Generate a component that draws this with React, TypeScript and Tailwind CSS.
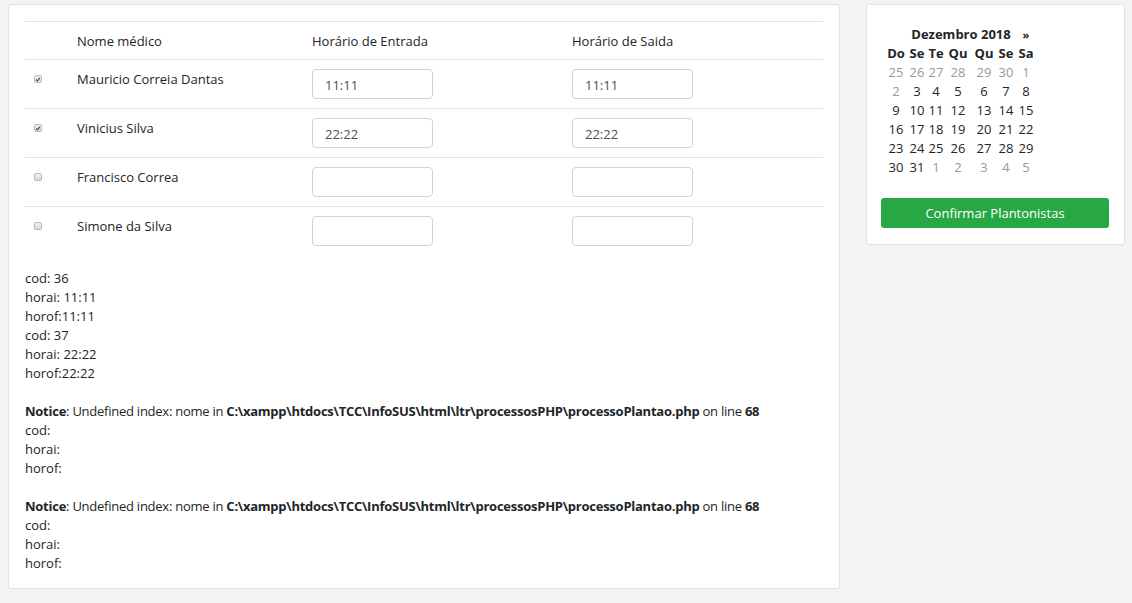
import React from 'react'

const medicos = [
  { nome: 'Mauricio Correia Dantas', checked: true, entrada: '11:11', saida: '11:11' },
  { nome: 'Vinicius Silva', checked: true, entrada: '22:22', saida: '22:22' },
  { nome: 'Francisco Correa', checked: false, entrada: '', saida: '' },
  { nome: 'Simone da Silva', checked: false, entrada: '', saida: '' },
]

// [dia, mês atual?]
const semanas: [number, boolean][][] = [
  [[25, false], [26, false], [27, false], [28, false], [29, false], [30, false], [1, false]],
  [[2, false], [3, true], [4, true], [5, true], [6, true], [7, true], [8, true]],
  [[9, true], [10, true], [11, true], [12, true], [13, true], [14, true], [15, true]],
  [[16, true], [17, true], [18, true], [19, true], [20, true], [21, true], [22, true]],
  [[23, true], [24, true], [25, true], [26, true], [27, true], [28, true], [29, true]],
  [[30, true], [31, true], [1, false], [2, false], [3, false], [4, false], [5, false]],
]

const colW = ['w-[22px]', 'w-[20px]', 'w-[18px]', 'w-[26px]', 'w-[26px]', 'w-[18px]', 'w-[22px]']
const diasSemana = ['Do', 'Se', 'Te', 'Qu', 'Qu', 'Se', 'Sa']

function Check({ checked }: { checked: boolean }) {
  return (
    <span className="mt-[5px] ml-[9px] flex h-[8px] w-[8px] items-center justify-center rounded-[2px] border border-[#b9b9b9] bg-gradient-to-b from-[#f4f4f4] to-[#d8d8d8]">
      {checked && (
        <svg viewBox="0 0 8 8" className="h-[7px] w-[7px]">
          <path d="M1.5 4.2 L3.2 5.8 L6.5 1.8" fill="none" stroke="#333" strokeWidth="1.4" />
        </svg>
      )}
    </span>
  )
}

function Notice() {
  return (
    <>
      <div className="h-[19px]" />
      <div className="tracking-[-0.25px]">
        <b>Notice</b>: Undefined index: nome in{' '}
        <b>C:\xampp\htdocs\TCC\InfoSUS\html\ltr\processosPHP\processoPlantao.php</b> on line <b>68</b>
      </div>
      <div>cod:</div>
      <div>horai:</div>
      <div>horof:</div>
    </>
  )
}

export default function App() {
  return (
    <div className="min-h-screen bg-[#f2f3f5] pt-[4px] pl-[8px] pr-[7px] font-['Open_Sans',sans-serif] text-[13px] leading-[19px] text-[#212529]">
      <div className="flex items-start gap-[26px]">
        {/* Tabela de plantonistas */}
        <div className="w-[832px] rounded-[3px] border border-[#dfe1e4] bg-white px-4 pt-4 pb-[15px]">
          <table className="w-full border-collapse border-t border-[#dee2e6]">
            <thead>
              <tr className="border-b border-[#dee2e6]">
                <th className="w-[40px]" />
                <th className="w-[235px] pt-[10px] pb-[8px] pl-3 text-left font-normal">Nome médico</th>
                <th className="w-[260px] pt-[10px] pb-[8px] pl-3 text-left font-normal">Horário de Entrada</th>
                <th className="pt-[10px] pb-[8px] pl-3 text-left font-normal">Horário de Saida</th>
              </tr>
            </thead>
            <tbody>
              {medicos.map((m, i) => (
                <tr key={m.nome} className={i < medicos.length - 1 ? 'border-b border-[#dee2e6]' : ''}>
                  <td className="pt-[10px] align-top">
                    <Check checked={m.checked} />
                  </td>
                  <td className="pt-[10px] pl-3 align-top">{m.nome}</td>
                  <td className="py-[9px] pl-3 align-top">
                    <input
                      defaultValue={m.entrada}
                      className="h-[30px] w-[121px] rounded-[4px] border border-[#ced4da] px-3 pt-[2px] text-[13px] text-[#495057] outline-none"
                    />
                  </td>
                  <td className="py-[9px] pl-3 align-top">
                    <input
                      defaultValue={m.saida}
                      className="h-[30px] w-[121px] rounded-[4px] border border-[#ced4da] px-3 pt-[2px] text-[13px] text-[#495057] outline-none"
                    />
                  </td>
                </tr>
              ))}
            </tbody>
          </table>

          <div className="mt-[14px]">
            <div>cod: 36</div>
            <div>horai: 11:11</div>
            <div>horof:11:11</div>
            <div>cod: 37</div>
            <div>horai: 22:22</div>
            <div>horof:22:22</div>
            <Notice />
            <Notice />
          </div>
        </div>

        {/* Calendário */}
        <div className="w-[259px] rounded-[3px] border border-[#dfe1e4] bg-white px-[14px] pt-[20px] pb-[16px]">
          <table className="ml-[4px] border-collapse text-center">
            <thead>
              <tr>
                <th className={colW[0]} />
                <th colSpan={5} className="py-0 font-bold">Dezembro 2018</th>
                <th className="text-[11px] font-bold">»</th>
              </tr>
              <tr>
                {diasSemana.map((d, i) => (
                  <th key={i} className={`${colW[i]} font-bold`}>{d}</th>
                ))}
              </tr>
            </thead>
            <tbody>
              {semanas.map((s, i) => (
                <tr key={i}>
                  {s.map(([d, atual], j) => (
                    <td key={j} className={atual ? 'text-[#212529]' : 'text-[#999999]'}>{d}</td>
                  ))}
                </tr>
              ))}
            </tbody>
          </table>
          <button className="mt-[21px] h-[30px] w-[228px] rounded-[3px] bg-[#28a745] text-[13px] text-white">
            Confirmar Plantonistas
          </button>
        </div>
      </div>
    </div>
  )
}
